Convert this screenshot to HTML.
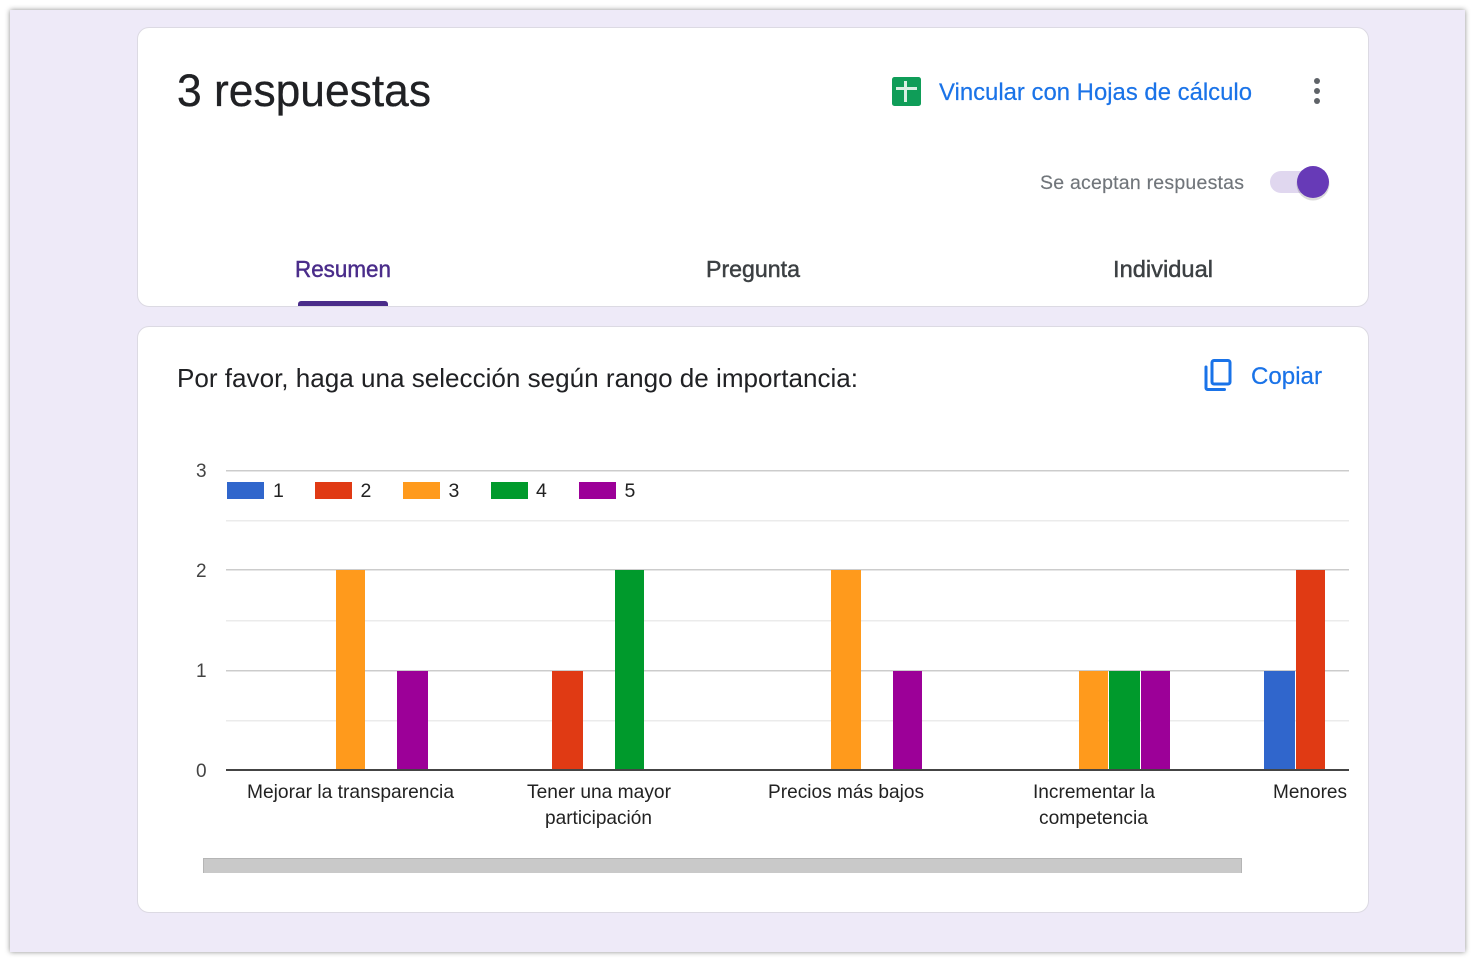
<!DOCTYPE html>
<html><head><meta charset="utf-8"><style>
html,body{margin:0;padding:0;background:#fff;width:1474px;height:962px;overflow:hidden}
#f{position:absolute;left:10px;top:10px;width:1455px;height:942px;background:#eeeaf8;box-shadow:0 0 5px rgba(0,0,0,.45)}
.c{position:absolute;left:137px;width:1230px;background:#fff;border:1px solid #dcdae3;border-radius:12px;box-sizing:content-box}
svg{position:absolute;left:0;top:0}
text{font-family:"Liberation Sans",sans-serif}
</style></head><body>
<div id="f"></div>
<div class="c" style="top:27px;height:278px"></div>
<div class="c" style="top:326px;height:585px"></div>
<svg width="1474" height="962" viewBox="0 0 1474 962">
<text x="177" y="106" font-size="45" fill="#202124" stroke="#202124" stroke-width=".3" textLength="254" lengthAdjust="spacingAndGlyphs">3 respuestas</text>
<rect x="892" y="77" width="29" height="29" rx="2.500" fill="#0f9d58"/>
<rect x="896" y="87" width="21" height="3" fill="#d9f0e3"/>
<rect x="904" y="81" width="3" height="21" fill="#d9f0e3"/>
<text x="939" y="100" font-size="24.500" fill="#1a73e8" stroke="#1a73e8" stroke-width=".2" textLength="313" lengthAdjust="spacingAndGlyphs">Vincular con Hojas de cálculo</text>
<circle cx="1317" cy="81" r="3" fill="#5f6368"/><circle cx="1317" cy="91" r="3" fill="#5f6368"/><circle cx="1317" cy="101" r="3" fill="#5f6368"/>
<text x="1040" y="189" font-size="19.500" fill="#70757a" stroke="#70757a" stroke-width=".15" textLength="204">Se aceptan respuestas</text>
<rect x="1270" y="171" width="50" height="22" rx="11" fill="#e0d7ef"/>
<circle cx="1313" cy="184" r="16.500" fill="#000" opacity=".14"/>
<circle cx="1313" cy="182" r="16" fill="#673ab7"/>
<text x="295" y="277" font-size="23" fill="#4a2c8a" stroke="#4a2c8a" stroke-width=".45" textLength="96" lengthAdjust="spacingAndGlyphs">Resumen</text>
<text x="706" y="277" font-size="23" fill="#3c4043" stroke="#3c4043" stroke-width=".45" textLength="94" lengthAdjust="spacingAndGlyphs">Pregunta</text>
<text x="1113" y="277" font-size="23" fill="#3c4043" stroke="#3c4043" stroke-width=".45" textLength="100" lengthAdjust="spacingAndGlyphs">Individual</text>
<path d="M298 306v-2a3 3 0 0 1 3-3h84a3 3 0 0 1 3 3v2z" fill="#4a2c8a"/>
<text x="177" y="387" font-size="26" fill="#202124" textLength="681" lengthAdjust="spacingAndGlyphs">Por favor, haga una selección según rango de importancia:</text>
<path d="M1206 367v21a1.500 1.500 0 0 0 1.500 1.500h17" fill="none" stroke="#1a73e8" stroke-width="3" stroke-linecap="round"/>
<rect x="1212" y="360.500" width="18" height="23.500" rx="2" fill="none" stroke="#1a73e8" stroke-width="3"/>
<text x="1251" y="384" font-size="24.500" fill="#1a73e8" stroke="#1a73e8" stroke-width=".2" textLength="71" lengthAdjust="spacingAndGlyphs">Copiar</text>

<g shape-rendering="crispEdges">
<rect x="226" y="470" width="1123" height="1.500" fill="#ccc"/>
<rect x="226" y="520" width="1123" height="1.500" fill="#ebebeb"/>
<rect x="226" y="569" width="1123" height="1.500" fill="#ccc"/>
<rect x="226" y="620" width="1123" height="1.500" fill="#ebebeb"/>
<rect x="226" y="670" width="1123" height="1.500" fill="#ccc"/>
<rect x="226" y="720" width="1123" height="1.500" fill="#ebebeb"/>

<rect x="227" y="482" width="37" height="17" fill="#3066cc"/>
<rect x="315" y="482" width="37" height="17" fill="#e03a14"/>
<rect x="403" y="482" width="37" height="17" fill="#ff9a1c"/>
<rect x="491" y="482" width="37" height="17" fill="#009a2c"/>
<rect x="579" y="482" width="37" height="17" fill="#9c0098"/>

<rect x="336" y="570" width="29" height="200" fill="#ff9a1c"/>
<rect x="397" y="671" width="31" height="99" fill="#9c0098"/>
<rect x="552" y="671" width="31" height="99" fill="#e03a14"/>
<rect x="615" y="570" width="29" height="200" fill="#009a2c"/>
<rect x="831" y="570" width="30" height="200" fill="#ff9a1c"/>
<rect x="893" y="671" width="29" height="99" fill="#9c0098"/>
<rect x="1079" y="671" width="29" height="99" fill="#ff9a1c"/>
<rect x="1109" y="671" width="31" height="99" fill="#009a2c"/>
<rect x="1141" y="671" width="29" height="99" fill="#9c0098"/>
<rect x="1264" y="671" width="31" height="99" fill="#3066cc"/>
<rect x="1296" y="570" width="29" height="200" fill="#e03a14"/>
<rect x="226" y="769" width="1123" height="2" fill="#444"/>
<rect x="203" y="858" width="1039" height="15" fill="#c9c9c9"/>
<rect x="203" y="858" width="1039" height="1" fill="#b5b5b5"/>
<rect x="203" y="858" width="1" height="15" fill="#b5b5b5"/>
<rect x="1241" y="858" width="1" height="15" fill="#b5b5b5"/>
</g>

<g font-size="19" fill="#444">
<text x="196" y="477">3</text><text x="196" y="577">2</text><text x="196" y="677">1</text><text x="196" y="777">0</text>
</g>
<g font-size="19.500" fill="#222">
<text x="273" y="497">1</text><text x="360.500" y="497">2</text><text x="448.500" y="497">3</text><text x="536" y="497">4</text><text x="624.500" y="497">5</text>
<text x="247" y="798" textLength="207" lengthAdjust="spacingAndGlyphs">Mejorar la transparencia</text>
<text x="527" y="798" textLength="144" lengthAdjust="spacingAndGlyphs">Tener una mayor</text>
<text x="545" y="824" textLength="107" lengthAdjust="spacingAndGlyphs">participación</text>
<text x="768" y="798" textLength="156" lengthAdjust="spacingAndGlyphs">Precios más bajos</text>
<text x="1033" y="798" textLength="122" lengthAdjust="spacingAndGlyphs">Incrementar la</text>
<text x="1039" y="824" textLength="109" lengthAdjust="spacingAndGlyphs">competencia</text>
<text x="1273" y="798" textLength="74" lengthAdjust="spacingAndGlyphs">Menores</text>
</g>
</svg>
</body></html>
